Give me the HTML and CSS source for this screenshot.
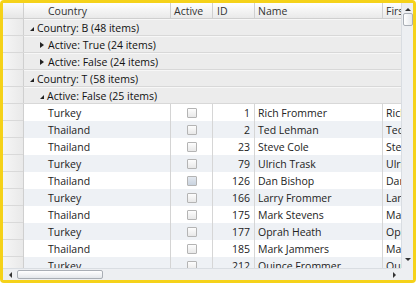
FILE: index.html
```html
<!DOCTYPE html>
<html lang="en">
<head>
    <meta charset="UTF-8">
    <title>Grid - grouped by Country and Active</title>
    <link rel="stylesheet" href="styles.css">
</head>
<body>
    <div class="frame">
        <div class="grid">
            <div class="viewport">
                <!-- column headers -->
                <div class="row header">
                    <div class="gutter"></div>
                    <div class="cell country">Country</div>
                    <div class="cell active">Active</div>
                    <div class="cell id">ID</div>
                    <div class="cell name">Name</div>
                    <div class="cell first">First</div>
                </div>

                <!-- groups -->
                <div class="row group">
                    <div class="gutter"></div>
                    <div class="group-cell lvl1"><span class="tri open"></span>Country: B (48 items)</div>
                </div>
                <div class="row group">
                    <div class="gutter"></div>
                    <div class="group-cell lvl2"><span class="tri closed"></span>Active: True (24 items)</div>
                </div>
                <div class="row group">
                    <div class="gutter"></div>
                    <div class="group-cell lvl2"><span class="tri closed"></span>Active: False (24 items)</div>
                </div>
                <div class="row group">
                    <div class="gutter"></div>
                    <div class="group-cell lvl1"><span class="tri open"></span>Country: T (58 items)</div>
                </div>
                <div class="row group">
                    <div class="gutter"></div>
                    <div class="group-cell lvl2"><span class="tri open"></span>Active: False (25 items)</div>
                </div>

                <!-- data rows -->
                <div class="row data">
                    <div class="gutter"></div>
                    <div class="cell country">Turkey</div>
                    <div class="cell active"><span class="check"></span></div>
                    <div class="cell id">1</div>
                    <div class="cell name">Rich Frommer</div>
                    <div class="cell first">Rich</div>
                </div>
                <div class="row data alt">
                    <div class="gutter"></div>
                    <div class="cell country">Thailand</div>
                    <div class="cell active"><span class="check"></span></div>
                    <div class="cell id">2</div>
                    <div class="cell name">Ted Lehman</div>
                    <div class="cell first">Ted</div>
                </div>
                <div class="row data">
                    <div class="gutter"></div>
                    <div class="cell country">Thailand</div>
                    <div class="cell active"><span class="check"></span></div>
                    <div class="cell id">23</div>
                    <div class="cell name">Steve Cole</div>
                    <div class="cell first">Steve</div>
                </div>
                <div class="row data alt">
                    <div class="gutter"></div>
                    <div class="cell country">Turkey</div>
                    <div class="cell active"><span class="check"></span></div>
                    <div class="cell id">79</div>
                    <div class="cell name">Ulrich Trask</div>
                    <div class="cell first">Ulrich</div>
                </div>
                <div class="row data">
                    <div class="gutter"></div>
                    <div class="cell country">Thailand</div>
                    <div class="cell active"><span class="check hover"></span></div>
                    <div class="cell id">126</div>
                    <div class="cell name">Dan Bishop</div>
                    <div class="cell first">Dan</div>
                </div>
                <div class="row data alt">
                    <div class="gutter"></div>
                    <div class="cell country">Turkey</div>
                    <div class="cell active"><span class="check"></span></div>
                    <div class="cell id">166</div>
                    <div class="cell name">Larry Frommer</div>
                    <div class="cell first">Larry</div>
                </div>
                <div class="row data">
                    <div class="gutter"></div>
                    <div class="cell country">Thailand</div>
                    <div class="cell active"><span class="check"></span></div>
                    <div class="cell id">175</div>
                    <div class="cell name">Mark Stevens</div>
                    <div class="cell first">Mark</div>
                </div>
                <div class="row data alt">
                    <div class="gutter"></div>
                    <div class="cell country">Turkey</div>
                    <div class="cell active"><span class="check"></span></div>
                    <div class="cell id">177</div>
                    <div class="cell name">Oprah Heath</div>
                    <div class="cell first">Oprah</div>
                </div>
                <div class="row data">
                    <div class="gutter"></div>
                    <div class="cell country">Thailand</div>
                    <div class="cell active"><span class="check"></span></div>
                    <div class="cell id">185</div>
                    <div class="cell name">Mark Jammers</div>
                    <div class="cell first">Mark</div>
                </div>
                <div class="row data alt">
                    <div class="gutter"></div>
                    <div class="cell country">Turkey</div>
                    <div class="cell active"><span class="check"></span></div>
                    <div class="cell id">212</div>
                    <div class="cell name">Quince Frommer</div>
                    <div class="cell first">Quince</div>
                </div>
            </div>

            <!-- vertical scrollbar -->
            <div class="vscroll">
                <span class="arrow up"></span>
                <span class="vthumb"></span>
                <span class="vtrack"></span>
                <span class="arrow down"></span>
            </div>

            <!-- horizontal scrollbar -->
            <div class="hscroll">
                <span class="arrow left"></span>
                <span class="hthumb"></span>
                <span class="htrack"></span>
                <span class="arrow right"></span>
            </div>
            <div class="corner"></div>
        </div>
    </div>
</body>
</html>
```

FILE: styles.css
```css
html, body {
    margin: 0;
    padding: 0;
    background: #ffffff;
}
body {
    font-family: "Open Sans", "Noto Sans", sans-serif;
    font-size: 10.5px;
    color: #222;
}
.frame {
    width: 416px;
    height: 283px;
    box-sizing: border-box;
    border: 3px solid #f5d21a;
    border-radius: 4px;
    background: #fff;
}
.grid {
    display: grid;
    grid-template-columns: 398px 12px;
    grid-template-rows: 265px 12px;
    width: 410px;
    height: 277px;
    overflow: hidden;
}
.viewport {
    overflow: hidden;
    display: flex;
    flex-direction: column;
}
.row {
    display: flex;
    flex: none;
    height: 16px;
    border-bottom: 1px solid #dcdcdc;
    line-height: 16px;
    white-space: nowrap;
}
.gutter {
    flex: none;
    width: 20px;
    border-right: 1px solid #cfcfcf;
    background: linear-gradient(to right, #f6f6f6, #e9e9e9);
}
.cell {
    flex: none;
    box-sizing: border-box;
    overflow: hidden;
    border-right: 1px solid #d6d6d6;
}
.country { width: 147px; padding-left: 24px; }
.active { width: 42px; padding-left: 3px; }
.id { width: 42px; padding-left: 4px; }
.name { width: 128px; padding-left: 3px; }
.first { width: 39px; padding-left: 3px; border-right: none; }

.header {
    height: 15px;
    line-height: 16px;
    border-bottom: 1px solid #cfcfcf;
    background: linear-gradient(to bottom, #ffffff, #e9e9e9);
    color: #333;
}
.header .gutter {
    background: linear-gradient(to bottom, #fafafa, #e6e6e6);
}
.header .cell {
    border-right-color: #d0d0d0;
}

.group {
    background: #ececec;
    border-bottom: 1px solid #d8d8d8;
    box-shadow: inset 0 1px 0 #f7f7f7;
    color: #111;
}
.group-cell {
    flex: 1;
    display: flex;
    align-items: center;
    padding-top: 1px;
}
.lvl1 { padding-left: 6px; }
.lvl2 { padding-left: 16px; }
.tri {
    display: inline-block;
    width: 0;
    height: 0;
    margin-right: 3px;
}
.tri.open {
    border-left: 4px solid transparent;
    border-bottom: 4px solid #222;
    margin-top: 2px;
}
.tri.closed {
    border-top: 3px solid transparent;
    border-bottom: 3px solid transparent;
    border-left: 4px solid #222;
    margin-right: 4px;
}

.data {
    height: 17px;
    line-height: 17px;
    border-bottom: none;
    background: #fff;
}
.data.alt {
    background: #eef1f5;
}
.data .gutter {
    box-shadow: inset 0 -1px 0 #d9d9d9;
}
.data .cell {
    padding-top: 1px;
}
.data .cell.country {
    border-right-color: #d4d4d4;
}
.data .active {
    display: flex;
    align-items: center;
    justify-content: center;
    padding: 0;
}
.data .id {
    text-align: right;
    padding-right: 4px;
    padding-left: 0;
}
.check {
    display: block;
    width: 8px;
    height: 8px;
    border: 1px solid #b4b4b4;
    border-radius: 1px;
    background: linear-gradient(to bottom, #fdfdfd, #e8e8e8);
}
.check.hover {
    background: linear-gradient(to bottom, #e3e8ef, #c9d3df);
}

/* scrollbars */
.vscroll {
    display: flex;
    flex-direction: column;
    align-items: center;
    background: #edeff2;
    border-left: 1px solid #d9dde2;
}
.vtrack, .htrack {
    flex: 1;
}
.vthumb {
    width: 8px;
    height: 11px;
    margin-top: 2px;
    border: 1px solid #a9aeb5;
    border-radius: 2px;
    background: linear-gradient(to right, #ffffff, #e4e7eb);
}
.hscroll {
    display: flex;
    align-items: center;
    background: #edeff2;
    border-top: 1px solid #d9dde2;
}
.hthumb {
    width: 84px;
    height: 7px;
    margin-left: 5px;
    border: 1px solid #a9aeb5;
    border-radius: 2px;
    background: linear-gradient(to bottom, #ffffff, #e4e7eb);
}
.corner {
    background: #edeff2;
}
.arrow {
    flex: none;
    width: 0;
    height: 0;
}
.arrow.up {
    margin-top: 5px;
    border-left: 3px solid transparent;
    border-right: 3px solid transparent;
    border-bottom: 3px solid #333;
}
.arrow.down {
    margin-bottom: 7px;
    border-left: 3px solid transparent;
    border-right: 3px solid transparent;
    border-top: 3px solid #333;
}
.arrow.left {
    margin-left: 6px;
    border-top: 3px solid transparent;
    border-bottom: 3px solid transparent;
    border-right: 3px solid #333;
}
.arrow.right {
    margin-right: 5px;
    border-top: 3px solid transparent;
    border-bottom: 3px solid transparent;
    border-left: 3px solid #333;
}
```
